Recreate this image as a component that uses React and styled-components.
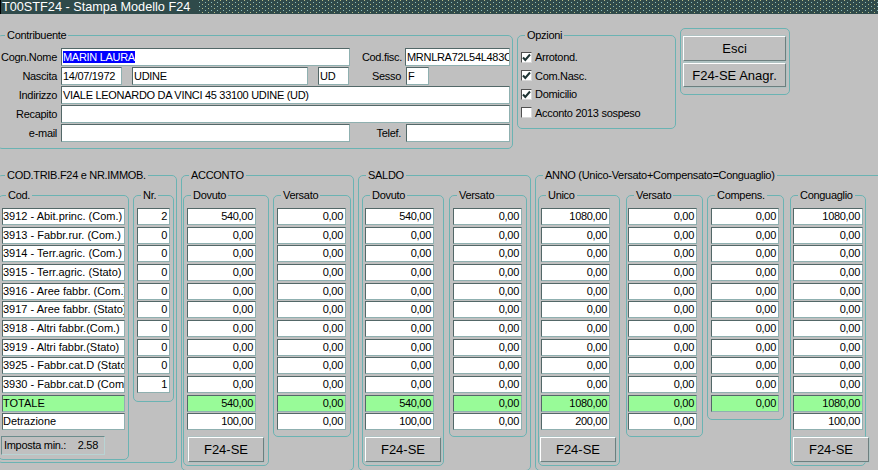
import React from "react";
import styled, { createGlobalStyle } from "styled-components";

const GlobalStyle = createGlobalStyle`
  * { box-sizing: border-box; }
  html, body {
    margin: 0;
    padding: 0;
    background: #c0c0c0;
  }
  body {
    width: 878px;
    height: 470px;
    overflow: hidden;
    font-family: "Liberation Sans", Arial, sans-serif;
    font-size: 11px;
    letter-spacing: -0.3px;
    color: #000;
  }
`;

const Window = styled.div`
  width: 878px;
  height: 470px;
  overflow: hidden;
  background: #c0c0c0;
`;

const TitleBar = styled.div`
  display: flex;
  height: 14px;
  background: #2f4a4a;
  border-left: 1px solid #000;
`;

const TitleText = styled.div`
  color: #fff;
  font-size: 12.7px;
  letter-spacing: 0;
  line-height: 14px;
  padding: 0 9px 0 1px;
  white-space: nowrap;
`;

const TitleDots = styled.div`
  flex: 1;
  background-image: conic-gradient(at 1px 1px, transparent 75%, #8cbcbc 0),
    conic-gradient(at 1px 1px, transparent 75%, #b6bb86 0);
  background-size: 6px 4px, 6px 4px;
  background-position: 0 2px, 3px 4px;
`;

const TopRow = styled.div`
  display: flex;
  align-items: flex-start;
  margin-left: -3px;
  padding-top: 14px;
`;

const BottomRow = styled.div`
  display: flex;
  align-items: flex-start;
  margin-left: -3px;
  margin-top: 19px;
`;

const Frame = styled.fieldset`
  flex: none;
  margin: 0 0 0 ${(p) => p.$ml || 0}px;
  padding: 0;
  min-width: 0;
  width: ${(p) => p.$w}px;
  border: 1px solid #6bb3b3;
  border-radius: 5px;
`;

const Legend = styled.legend`
  margin-left: 7px;
  padding: 0 2px;
  font-size: 11px;
  line-height: 14px;
  white-space: nowrap;
`;

const FrameBody = styled.div`
  display: flex;
  flex-direction: ${(p) => p.$dir || "column"};
  align-items: flex-start;
  gap: ${(p) => p.$gap || 0}px;
  padding: ${(p) => p.$pad};
`;

const FormRow = styled.div`
  display: flex;
  align-items: center;
  height: 18px;
`;

const Label = styled.div`
  flex: none;
  width: ${(p) => p.$w}px;
  margin-right: ${(p) => p.$mr}px;
  text-align: right;
  white-space: nowrap;
  line-height: 18px;
`;

const Field = styled.div`
  flex: none;
  width: ${(p) => p.$w}px;
  height: 18px;
  margin-left: ${(p) => p.$ml || 0}px;
  background: #fff;
  border: 1px solid #8fb0b0;
  border-top-color: #536868;
  border-left-color: #536868;
  padding: 0 1px;
  line-height: 16px;
  white-space: nowrap;
  overflow: hidden;
`;

const Selected = styled.span`
  background: #0000ff;
  color: #fff;
`;

const CheckRow = styled.div`
  display: flex;
  align-items: center;
  gap: 3px;
  height: 18.5px;
  white-space: nowrap;
`;

const CheckBox = styled.span`
  flex: none;
  width: 11px;
  height: 11px;
  background: #fff;
  border: 1px solid #d8d8d8;
  border-top-color: #505050;
  border-left-color: #505050;
  display: flex;
  align-items: center;
  justify-content: center;
`;

const ButtonPanel = styled.div`
  flex: none;
  margin-left: 4px;
  width: 110px;
  display: flex;
  flex-direction: column;
  gap: 2px;
  padding: 7px 3px 7px 2px;
  border: 1px solid #6bb3b3;
  border-radius: 5px;
`;

const Button = styled.div`
  flex: none;
  width: ${(p) => p.$w || 103}px;
  height: ${(p) => p.$h || 25}px;
  margin-left: ${(p) => p.$ml || 0}px;
  margin-top: ${(p) => p.$mt || 0}px;
  background: #c0c0c0;
  border: 1px solid #6d7f7f;
  border-top-color: #fff;
  border-left-color: #fff;
  box-shadow: 0 0 0 0.5px #9ec4c4;
  display: flex;
  align-items: center;
  justify-content: center;
  font-size: 13px;
  letter-spacing: 0;
  white-space: nowrap;
`;

const CellStack = styled.div`
  display: flex;
  flex-direction: column;
  gap: 1.67px;
`;

const Cell = styled.div`
  flex: none;
  width: ${(p) => p.$w}px;
  height: 17px;
  background: ${(p) => (p.$total ? "#98fb98" : "#fff")};
  border: 1px solid #8fb0b0;
  border-top-color: #536868;
  border-left-color: #536868;
  padding: 0 ${(p) => (p.$num ? 2 : 0)}px;
  text-align: ${(p) => (p.$num ? "right" : "left")};
  letter-spacing: ${(p) => (p.$num ? "-0.3px" : "0")};
  line-height: 15px;
  white-space: nowrap;
  overflow: hidden;
`;

const MinBox = styled.div`
  display: flex;
  justify-content: space-between;
  width: 104px;
  height: 19px;
  margin: 6px 0 0 -1px;
  padding: 0 6px 0 2px;
  border: 1px solid #b8d4d4;
  border-top-color: #6c8c8c;
  border-left-color: #6c8c8c;
  line-height: 17px;
  white-space: nowrap;
`;

const CODES = [
  { cod: "3912 - Abit.princ. (Com.)", nr: 2 },
  { cod: "3913 - Fabbr.rur.  (Com.)", nr: 0 },
  { cod: "3914 - Terr.agric. (Com.)", nr: 0 },
  { cod: "3915 - Terr.agric. (Stato)", nr: 0 },
  { cod: "3916 - Aree fabbr. (Com.)", nr: 0 },
  { cod: "3917 - Aree fabbr. (Stato)", nr: 0 },
  { cod: "3918 - Altri fabbr.(Com.)", nr: 0 },
  { cod: "3919 - Altri fabbr.(Stato)", nr: 0 },
  { cod: "3925 - Fabbr.cat.D (Stato)", nr: 0 },
  { cod: "3930 - Fabbr.cat.D (Com.)", nr: 1 },
];

const zeros = (first) => [first, ...Array(9).fill("0,00")];

const ACCONTO = [
  { title: "Dovuto", w: 86, pl: 3, values: zeros("540,00"), total: "540,00", detr: "100,00", button: 1 },
  { title: "Versato", w: 78, pl: 3, values: zeros("0,00"), total: "0,00", detr: "0,00" },
];

const SALDO = [
  { title: "Dovuto", w: 82, pl: 2, values: zeros("540,00"), total: "540,00", detr: "100,00", button: 0 },
  { title: "Versato", w: 78, pl: 3, values: zeros("0,00"), total: "0,00", detr: "0,00" },
];

const ANNO = [
  { title: "Unico", w: 82, pl: 2, values: zeros("1080,00"), total: "1080,00", detr: "200,00", button: -1 },
  { title: "Versato", w: 77, pl: 1, ml: 6, values: zeros("0,00"), total: "0,00", detr: "0,00" },
  { title: "Compens.", w: 77, pl: 3, ml: 4, cw: 68, values: zeros("0,00"), total: "0,00" },
  { title: "Conguaglio", w: 76, pl: 2, ml: 6, cw: 70, values: zeros("1080,00"), total: "1080,00", detr: "100,00", button: 0 },
];

function Check({ checked }) {
  return (
    <CheckBox>
      {checked && (
        <svg width="9" height="9" viewBox="0 0 9 9">
          <path d="M1 4.5 L3.3 7 L8 1.5" fill="none" stroke="#1f3535" strokeWidth="2" />
        </svg>
      )}
    </CheckBox>
  );
}

function AmountColumn({ col }) {
  const { title, w, pl, ml, cw = 69, values, total, detr, button } = col;
  let pb = 6;
  if (detr === undefined) pb = 7;
  if (button !== undefined) pb = 3;
  return (
    <Frame $w={w} $ml={ml}>
      <Legend>{title}</Legend>
      <FrameBody $pad={`6px 0 ${pb}px ${pl}px`}>
        <CellStack>
          {values.map((v, i) => (
            <Cell key={i} $w={cw} $num>
              {v}
            </Cell>
          ))}
          <Cell $w={cw} $num $total>
            {total}
          </Cell>
          {detr !== undefined && (
            <Cell $w={cw} $num>
              {detr}
            </Cell>
          )}
        </CellStack>
        {button !== undefined && (
          <Button $w={76} $ml={button} $mt={7}>
            F24-SE
          </Button>
        )}
      </FrameBody>
    </Frame>
  );
}

export default function App() {
  return (
    <Window>
      <GlobalStyle />
      <TitleBar>
        <TitleText>T00STF24 - Stampa Modello F24</TitleText>
        <TitleDots />
      </TitleBar>

      <TopRow>
        <Frame $w={516}>
          <Legend>Contribuente</Legend>
          <FrameBody $pad="6px 1px 6px 0" $gap={1}>
            <FormRow>
              <Label $w={59} $mr={4}>Cogn.Nome</Label>
              <Field $w={289}>
                <Selected>MARIN LAURA</Selected>
              </Field>
              <Label $w={52} $mr={3}>Cod.fisc.</Label>
              <Field $w={105}>MRNLRA72L54L483C</Field>
            </FormRow>
            <FormRow>
              <Label $w={59} $mr={4}>Nascita</Label>
              <Field $w={61}>14/07/1972</Field>
              <Field $w={176} $ml={10}>UDINE</Field>
              <Field $w={31} $ml={10}>UD</Field>
              <Label $w={52} $mr={5}>Sesso</Label>
              <Field $w={23}>F</Field>
            </FormRow>
            <FormRow>
              <Label $w={59} $mr={4}>Indirizzo</Label>
              <Field $w={449}>VIALE LEONARDO DA VINCI 45 33100 UDINE (UD)</Field>
            </FormRow>
            <FormRow>
              <Label $w={59} $mr={4}>Recapito</Label>
              <Field $w={449} />
            </FormRow>
            <FormRow>
              <Label $w={59} $mr={4}>e-mail</Label>
              <Field $w={289} />
              <Label $w={51} $mr={5}>Telef.</Label>
              <Field $w={104} />
            </FormRow>
          </FrameBody>
        </Frame>

        <Frame $w={159} $ml={4}>
          <Legend>Opzioni</Legend>
          <FrameBody $pad="6px 0 6px 3px">
            <CheckRow>
              <Check checked />
              Arrotond.
            </CheckRow>
            <CheckRow>
              <Check checked />
              Com.Nasc.
            </CheckRow>
            <CheckRow>
              <Check checked />
              Domicilio
            </CheckRow>
            <CheckRow>
              <Check />
              Acconto 2013 sospeso
            </CheckRow>
          </FrameBody>
        </Frame>

        <ButtonPanel>
          <Button>Esci</Button>
          <Button $h={24}>F24-SE Anagr.</Button>
        </ButtonPanel>
      </TopRow>

      <BottomRow>
        <Frame $w={180}>
          <Legend>COD.TRIB.F24 e NR.IMMOB.</Legend>
          <FrameBody $dir="row" $gap={4} $pad="6px 2px 2px 0">
            <Frame $w={131}>
              <Legend>Cod.</Legend>
              <FrameBody $pad="6px 0 4px 3px">
                <CellStack>
                  {CODES.map((c) => (
                    <Cell key={c.cod} $w={123}>
                      {c.cod}
                    </Cell>
                  ))}
                  <Cell $w={123} $total>
                    TOTALE
                  </Cell>
                  <Cell $w={123}>Detrazione</Cell>
                </CellStack>
                <MinBox>
                  <span>Imposta min.:</span>
                  <span>2.58</span>
                </MinBox>
              </FrameBody>
            </Frame>
            <Frame $w={41}>
              <Legend>Nr.</Legend>
              <FrameBody $pad="6px 0 8px 3px">
                <CellStack>
                  {CODES.map((c) => (
                    <Cell key={c.cod} $w={33} $num>
                      {c.nr}
                    </Cell>
                  ))}
                </CellStack>
              </FrameBody>
            </Frame>
          </FrameBody>
        </Frame>

        <Frame $w={173} $ml={4}>
          <Legend>ACCONTO</Legend>
          <FrameBody $dir="row" $gap={4} $pad="6px 2px 4px 1px">
            {ACCONTO.map((col) => (
              <AmountColumn key={col.title} col={col} />
            ))}
          </FrameBody>
        </Frame>

        <Frame $w={173} $ml={4}>
          <Legend>SALDO</Legend>
          <FrameBody $dir="row" $gap={5} $pad="6px 3px 4px 3px">
            {SALDO.map((col) => (
              <AmountColumn key={col.title} col={col} />
            ))}
          </FrameBody>
        </Frame>

        <Frame $w={360} $ml={4}>
          <Legend>ANNO (Unico-Versato+Compensato=Conguaglio)</Legend>
          <FrameBody $dir="row" $pad="6px 2px 4px 2px">
            {ANNO.map((col) => (
              <AmountColumn key={col.title} col={col} />
            ))}
          </FrameBody>
        </Frame>
      </BottomRow>
    </Window>
  );
}
